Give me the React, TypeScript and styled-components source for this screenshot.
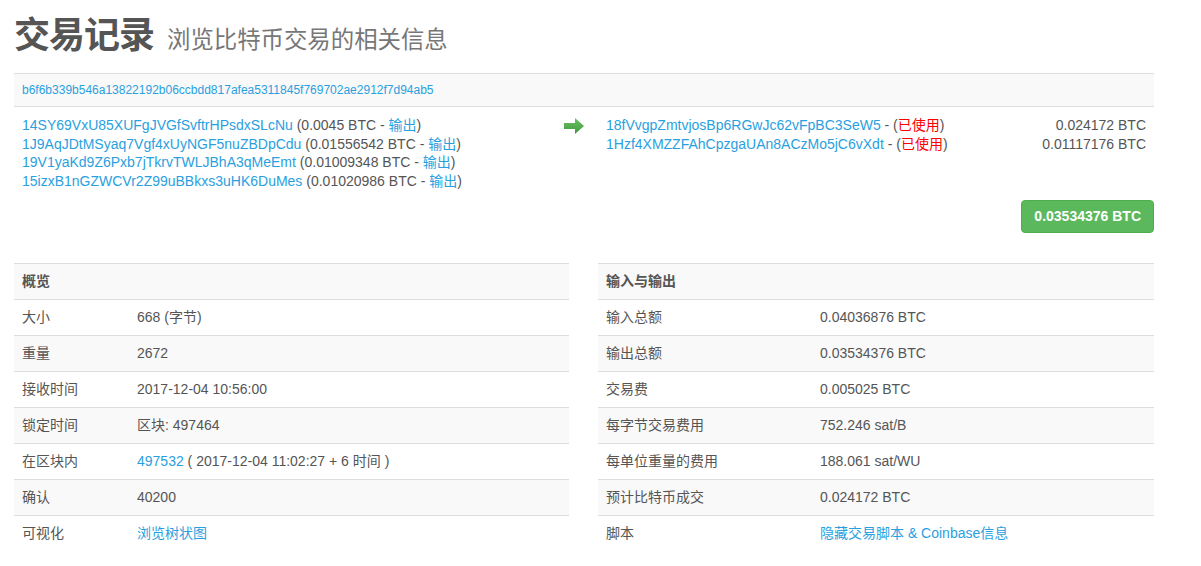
import React from "react";
import styled, { createGlobalStyle } from "styled-components";

const Global = createGlobalStyle`
  html, body { margin: 0; padding: 0; background: #fff; }
  body {
    font-family: "Liberation Sans", Arial, "Noto Sans CJK SC", sans-serif;
    font-size: 14px;
    line-height: 1.42857;
    color: #555;
  }
  * { box-sizing: border-box; }
`;

const Page = styled.div`
  padding: 0 47px 0 14px;
  width: 1201px;
`;

const Heading = styled.h1`
  margin: 0;
  padding: 16px 0 12px;
  font-size: 36px;
  line-height: 40px;
  font-weight: bold;
  color: #555;
  letter-spacing: -1px;
`;

const Sub = styled.small`
  font-size: 23.4px;
  font-weight: normal;
  color: #777;
  letter-spacing: 0;
  margin-left: 4px;
`;

const Link = styled.a`
  color: #2a9fe0;
  text-decoration: none;
`;

const HashBar = styled.div`
  margin-top: 1px;
  background: #f9f9f9;
  border-top: 1px solid #ddd;
  border-bottom: 1px solid #ddd;
  padding: 7px 8px;
  font-size: 12px;
  line-height: 18px;
`;

const TxRow = styled.div`
  display: grid;
  grid-template-columns: 541px 43px 1fr;
  padding-top: 9px;
`;

const Inputs = styled.div`
  padding-left: 8px;
  font-size: 14px;
  line-height: 18.7px;
`;

const ArrowCell = styled.div`
  padding: 2px 0 0 9px;
`;

const Outputs = styled.div`
  padding: 0 8px;
  font-size: 14px;
  line-height: 18.7px;
`;

const OutLine = styled.div`
  display: flex;
  justify-content: space-between;
`;

const Spent = styled.span`
  color: #f00;
`;

const TotalWrap = styled.div`
  display: flex;
  justify-content: flex-end;
  margin-top: 9px;
`;

const TotalBtn = styled.span`
  display: inline-block;
  white-space: nowrap;
  background: #5cb85c;
  border: 1px solid #4cae4c;
  border-radius: 4px;
  color: #fff;
  font-weight: bold;
  font-size: 14px;
  line-height: 19px;
  padding: 6px 12px;
  min-width: 132px;
  text-align: center;
`;

const Tables = styled.div`
  display: grid;
  grid-template-columns: 555px 556px;
  column-gap: 29px;
  margin-top: 30px;
`;

const Table = styled.table`
  width: 100%;
  border-collapse: collapse;
  border-spacing: 0;
  font-size: 14px;
`;

const Tr = styled.tr<{ $shade?: boolean }>`
  background: ${(p) => (p.$shade ? "#f9f9f9" : "#fff")};
`;

const Td = styled.td<{ $w?: number }>`
  border-top: 1px solid #ddd;
  padding: 8px;
  height: 36px;
  line-height: 19px;
  vertical-align: middle;
  ${(p) => (p.$w ? `width: ${p.$w}px;` : "")}
`;

const Th = styled.th`
  border-top: 1px solid #ddd;
  padding: 8px;
  height: 36px;
  line-height: 19px;
  text-align: left;
  font-weight: bold;
  font-size: 14px;
  color: #555;
`;

const Arrow = () => (
  <svg width="20" height="16" viewBox="0 0 20 16">
    <defs>
      <linearGradient id="ag" x1="0" y1="0" x2="0" y2="1">
        <stop offset="0" stopColor="#6cc164" />
        <stop offset="1" stopColor="#3f9a3b" />
      </linearGradient>
    </defs>
    <path d="M0 5 H11 V0 L20 8 L11 16 V11 H0 Z" fill="url(#ag)" />
  </svg>
);

const inputs = [
  ["14SY69VxU85XUFgJVGfSvftrHPsdxSLcNu", "0.0045"],
  ["1J9AqJDtMSyaq7Vgf4xUyNGF5nuZBDpCdu", "0.01556542"],
  ["19V1yaKd9Z6Pxb7jTkrvTWLJBhA3qMeEmt", "0.01009348"],
  ["15izxB1nGZWCVr2Z99uBBkxs3uHK6DuMes", "0.01020986"],
];

const outputs = [
  ["18fVvgpZmtvjosBp6RGwJc62vFpBC3SeW5", "0.024172 BTC"],
  ["1Hzf4XMZZFAhCpzgaUAn8ACzMo5jC6vXdt", "0.01117176 BTC"],
];

type Row = { label: string; value: React.ReactNode };

const summary: Row[] = [
  { label: "大小", value: "668 (字节)" },
  { label: "重量", value: "2672" },
  { label: "接收时间", value: "2017-12-04 10:56:00" },
  { label: "锁定时间", value: "区块: 497464" },
  {
    label: "在区块内",
    value: (
      <>
        <Link href="#">497532</Link> ( 2017-12-04 11:02:27 + 6 时间 )
      </>
    ),
  },
  { label: "确认", value: "40200" },
  { label: "可视化", value: <Link href="#">浏览树状图</Link> },
];

const io: Row[] = [
  { label: "输入总额", value: "0.04036876 BTC" },
  { label: "输出总额", value: "0.03534376 BTC" },
  { label: "交易费", value: "0.005025 BTC" },
  { label: "每字节交易费用", value: "752.246 sat/B" },
  { label: "每单位重量的费用", value: "188.061 sat/WU" },
  { label: "预计比特币成交", value: "0.024172 BTC" },
  { label: "脚本", value: <Link href="#">隐藏交易脚本 &amp; Coinbase信息</Link> },
];

const InfoTable = ({ title, rows, labelW }: { title: string; rows: Row[]; labelW: number }) => (
  <Table>
    <thead>
      <Tr $shade>
        <Th colSpan={2}>{title}</Th>
      </Tr>
    </thead>
    <tbody>
      {rows.map((r, i) => (
        <Tr key={r.label} $shade={i % 2 === 1}>
          <Td $w={labelW}>{r.label}</Td>
          <Td>{r.value}</Td>
        </Tr>
      ))}
    </tbody>
  </Table>
);

export default function App() {
  return (
    <Page>
      <Global />
      <Heading>
        交易记录 <Sub>浏览比特币交易的相关信息</Sub>
      </Heading>
      <HashBar>
        <Link href="#">b6f6b339b546a13822192b06ccbdd817afea5311845f769702ae2912f7d94ab5</Link>
      </HashBar>
      <TxRow>
        <Inputs>
          {inputs.map(([a, v]) => (
            <div key={a}>
              <Link href="#">{a}</Link> ({v} BTC - <Link href="#">输出</Link>)
            </div>
          ))}
        </Inputs>
        <ArrowCell>
          <Arrow />
        </ArrowCell>
        <Outputs>
          {outputs.map(([a, v]) => (
            <OutLine key={a}>
              <span>
                <Link href="#">{a}</Link> - (<Spent>已使用</Spent>)
              </span>
              <span>{v}</span>
            </OutLine>
          ))}
        </Outputs>
      </TxRow>
      <TotalWrap>
        <TotalBtn>0.03534376 BTC</TotalBtn>
      </TotalWrap>
      <Tables>
        <InfoTable title="概览" rows={summary} labelW={115} />
        <InfoTable title="输入与输出" rows={io} labelW={214} />
      </Tables>
    </Page>
  );
}
